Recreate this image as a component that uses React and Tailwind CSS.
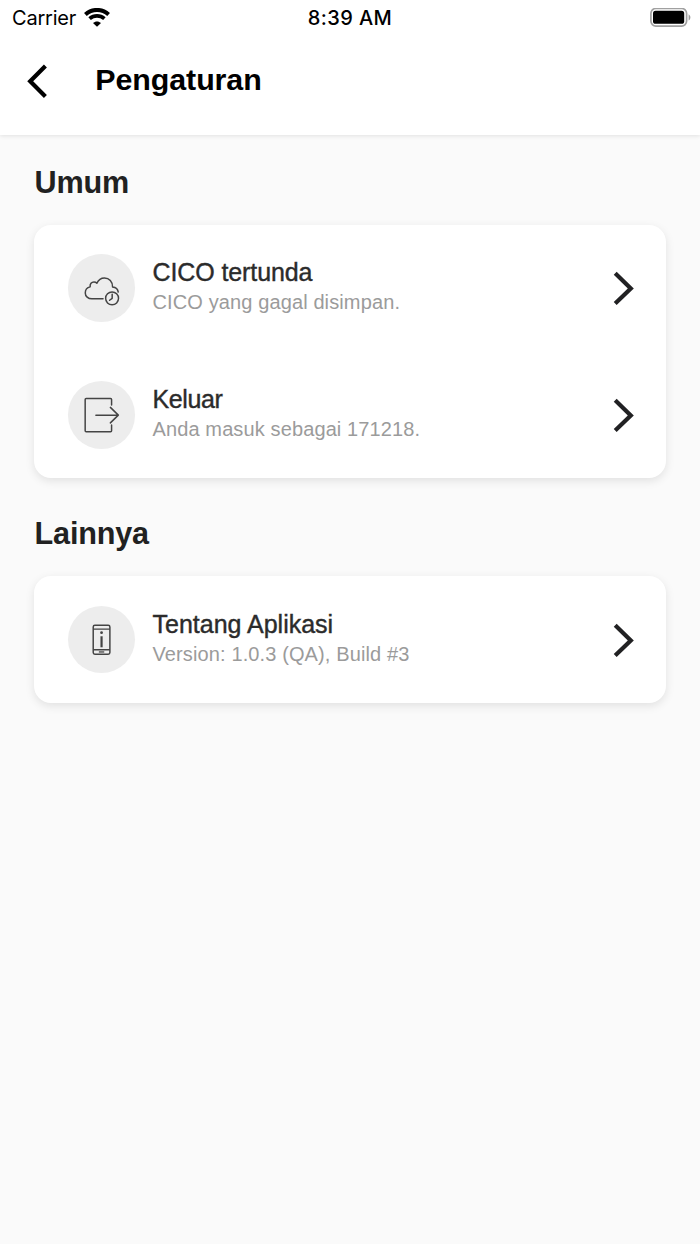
import React from "react";

function WifiIcon() {
  return (
    <svg className="ml-[7.4px] h-[20px] w-[26px]" viewBox="0 0 26 20" fill="none" stroke="#000">
      <path d="M1.4 6.4C8 .4 18 .4 24.6 6.4" strokeWidth="4" />
      <path d="M5.6 10.7C9.9 6.9 16.1 6.9 20.4 10.7" strokeWidth="3.7" />
      <path d="M13 18.8L9 15C11.3 12.9 14.7 12.9 17 15Z" fill="#000" stroke="none" />
    </svg>
  );
}

function BatteryIcon() {
  return (
    <svg className="h-[20px] w-[42px]" viewBox="0 0 42 20" fill="none">
      <rect x="0.9" y="0.5" width="35.7" height="17.6" rx="5" stroke="#a0a0a0" strokeWidth="1.7" />
      <rect x="3" y="2.8" width="31.2" height="13" rx="2.6" fill="#000" />
      <path d="M38.6 6.2C41 7.7 41 11.1 38.6 12.6Z" fill="#9b9b9b" />
    </svg>
  );
}

function Chevron({ back }) {
  return back ? (
    <svg className="h-[34px] w-[20px]" viewBox="0 0 20 34" fill="none" stroke="#000" strokeWidth="4.2">
      <path d="M18.4 2L3.2 17.2L18.4 32.4" />
    </svg>
  ) : (
    <svg className="h-[34px] w-[21px]" viewBox="0 0 21 34" fill="none" stroke="#212123" strokeWidth="4.2">
      <path d="M2.2 2.3L17.8 17.4L2.2 32.5" />
    </svg>
  );
}

function CloudClockIcon() {
  return (
    <svg className="size-full" viewBox="0.3 0 68 68" fill="none" stroke="#444" strokeWidth="1.5" strokeLinecap="round" strokeLinejoin="round">
      <path d="M35.6 45.2H24.4C20.5 45.2 17.7 42.6 17.7 39.2C17.7 35.9 19.5 33.7 22.6 33.1C22.3 30.1 24 28.2 26.4 28.2C27.6 28.2 28.6 28.6 29.4 29.4C31 25.9 33.6 24.2 37 24.2C41.8 24.2 45.3 27.7 45.2 33.2C48.5 33.5 50.6 35.7 50.9 38.4" />
      <circle cx="44.7" cy="44.7" r="6.5" />
      <path d="M44.8 40.6V44.7L42.2 46.6" />
    </svg>
  );
}

function LogoutIcon() {
  return (
    <svg className="size-full" viewBox="0.3 0 68 68" fill="none" stroke="#444" strokeWidth="1.5" strokeLinecap="round" strokeLinejoin="round">
      <path d="M44.2 24.2V18.6Q44.2 17.6 43.2 17.6H18.6Q17.6 17.6 17.6 18.6V50.2Q17.6 51.2 18.6 51.2H43.2Q44.2 51.2 44.2 50.2V44.4" />
      <path d="M28.4 34.4H51M43 26.6L51 34.4L43 42.2" />
    </svg>
  );
}

function PhoneInfoIcon() {
  return (
    <svg className="size-full" viewBox="0.2 0 68 68" fill="none" stroke="#444" strokeWidth="1.5">
      <rect x="25.6" y="19.4" width="16.8" height="29.2" rx="1.7" />
      <path d="M25.6 23.3H42.4M25.6 44.1H42.4" />
      <path d="M31.3 46.3H36.7" strokeWidth="1.3" />
      <circle cx="34" cy="26.9" r="1.4" fill="#444" stroke="none" />
      <path d="M34 30.5V41.6" strokeWidth="2.2" />
    </svg>
  );
}

function Row({ icon, title, titleClass, detail }) {
  return (
    <div className="flex h-[126.7px] items-center pr-[32px] pl-[33.7px]">
      <div className="size-[67.5px] shrink-0 rounded-full bg-[#ededed]">{icon}</div>
      <div className="ml-[17.3px] flex-1 pb-[2.5px] whitespace-nowrap">
        <div className={"text-[25px] leading-[30px] text-[#2b2b2b] [-webkit-text-stroke:0.4px_#2b2b2b] " + titleClass}>{title}</div>
        <div className="mt-[1px] text-[20px] leading-[28px] tracking-[0.12px] text-[#9b9b9b]">{detail}</div>
      </div>
      <Chevron />
    </div>
  );
}

function Section({ title, titleClass, children }) {
  return (
    <section>
      <h2 className={"pl-[0.6px] text-[30.6px] leading-[38px] font-bold tracking-[-0.2px] text-[#212121] " + titleClass}>{title}</h2>
      <div className="rounded-[17px] bg-white shadow-[0_3px_10px_rgba(0,0,0,0.1)]">{children}</div>
    </section>
  );
}

export default function App() {
  return (
    <div className="min-h-[1244px] w-[700px] bg-[#fafafa] font-['Liberation_Sans',Arial,sans-serif]">
      <header className="h-[135px] bg-white shadow-[0_1px_4px_rgba(0,0,0,0.1)]">
        <div className="grid h-[36px] grid-cols-3 items-center pr-[8px] pl-[12px] font-[Inter,sans-serif] text-black">
          <div className="flex items-center text-[20px] leading-[24px] tracking-[-0.2px]">
            Carrier
            <WifiIcon />
          </div>
          <div className="-ml-[4px] text-center text-[20px] leading-[24px] font-medium tracking-[0.4px]">8:39 AM</div>
          <div className="flex justify-end">
            <BatteryIcon />
          </div>
        </div>
        <div className="flex h-[90px] items-center pl-[27px]">
          <Chevron back />
          <h1 className="ml-[48.3px] pb-[4px] text-[30.4px] leading-[36px] font-bold tracking-[-0.08px] text-black">Pengaturan</h1>
        </div>
      </header>
      <main className="px-[34px]">
        <Section title="Umum" titleClass="h-[89.8px] pt-[28px]">
          <Row icon={<CloudClockIcon />} title="CICO tertunda" titleClass="tracking-[-0.1px]" detail="CICO yang gagal disimpan." />
          <Row icon={<LogoutIcon />} title="Keluar" titleClass="tracking-[-0.4px]" detail="Anda masuk sebagai 171218." />
        </Section>
        <Section title="Lainnya" titleClass="h-[98px] pt-[36.2px]">
          <Row icon={<PhoneInfoIcon />} title="Tentang Aplikasi" titleClass="" detail="Version: 1.0.3 (QA), Build #3" />
        </Section>
      </main>
    </div>
  );
}
